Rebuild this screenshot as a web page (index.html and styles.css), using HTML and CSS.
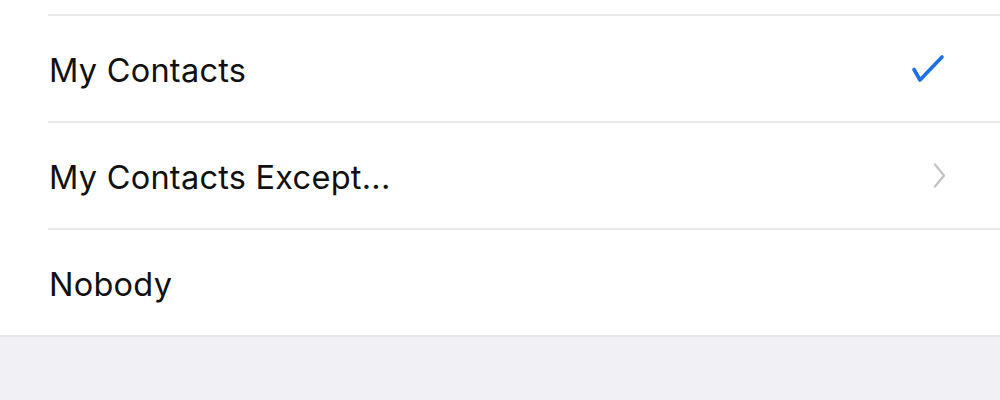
FILE: index.html
```html
<!DOCTYPE html>
<html>
<head>
<meta charset="utf-8">
<link rel="stylesheet" href="styles.css">
</head>
<body>
<div class="group">
  <div class="top"></div>
  <div class="row">
    <div class="cell">
      <span class="label">My Contacts</span>
      <svg class="check" width="34" height="30" viewBox="0 0 34 30"><path d="M3 15.5 L9 26 L31 3" fill="none" stroke="#1c6fe6" stroke-width="3.6" stroke-linecap="round" stroke-linejoin="round"/></svg>
    </div>
  </div>
  <div class="row">
    <div class="cell">
      <span class="label">My Contacts Except...</span>
      <svg class="chev" width="18" height="30" viewBox="0 0 18 30"><path d="M5 3.5 L14 14.5 L5 25.5" fill="none" stroke="#c4c4c9" stroke-width="2.4" stroke-linecap="round" stroke-linejoin="round"/></svg>
    </div>
  </div>
  <div class="row last">
    <div class="cell">
      <span class="label">Nobody</span>
    </div>
  </div>
</div>
<div class="footer"></div>
</body>
</html>
```
FILE: styles.css
```css
html, body {
  margin: 0;
  padding: 0;
  background: #f0f0f5;
}
body {
  width: 1000px;
  height: 400px;
  overflow: hidden;
  font-family: Inter, "Liberation Sans", sans-serif;
}
.group {
  background: #ffffff;
  border-bottom: 2px solid #e6e6e9;
}
.top {
  height: 14px;
}
.row {
  padding-left: 48px;
}
.cell {
  height: 105px;
  border-top: 2px solid #e8e8ea;
  display: flex;
  align-items: center;
  justify-content: space-between;
  padding-right: 52px;
  padding-left: 1px;
}
.label {
  font-size: 32.5px;
  color: #111111;
  letter-spacing: 0.25px;
  margin-top: 4px;
}
.check {
  margin-right: 3px;
}
.chev {
  margin-right: 0px;
}
.footer {
  height: 64px;
}
```
